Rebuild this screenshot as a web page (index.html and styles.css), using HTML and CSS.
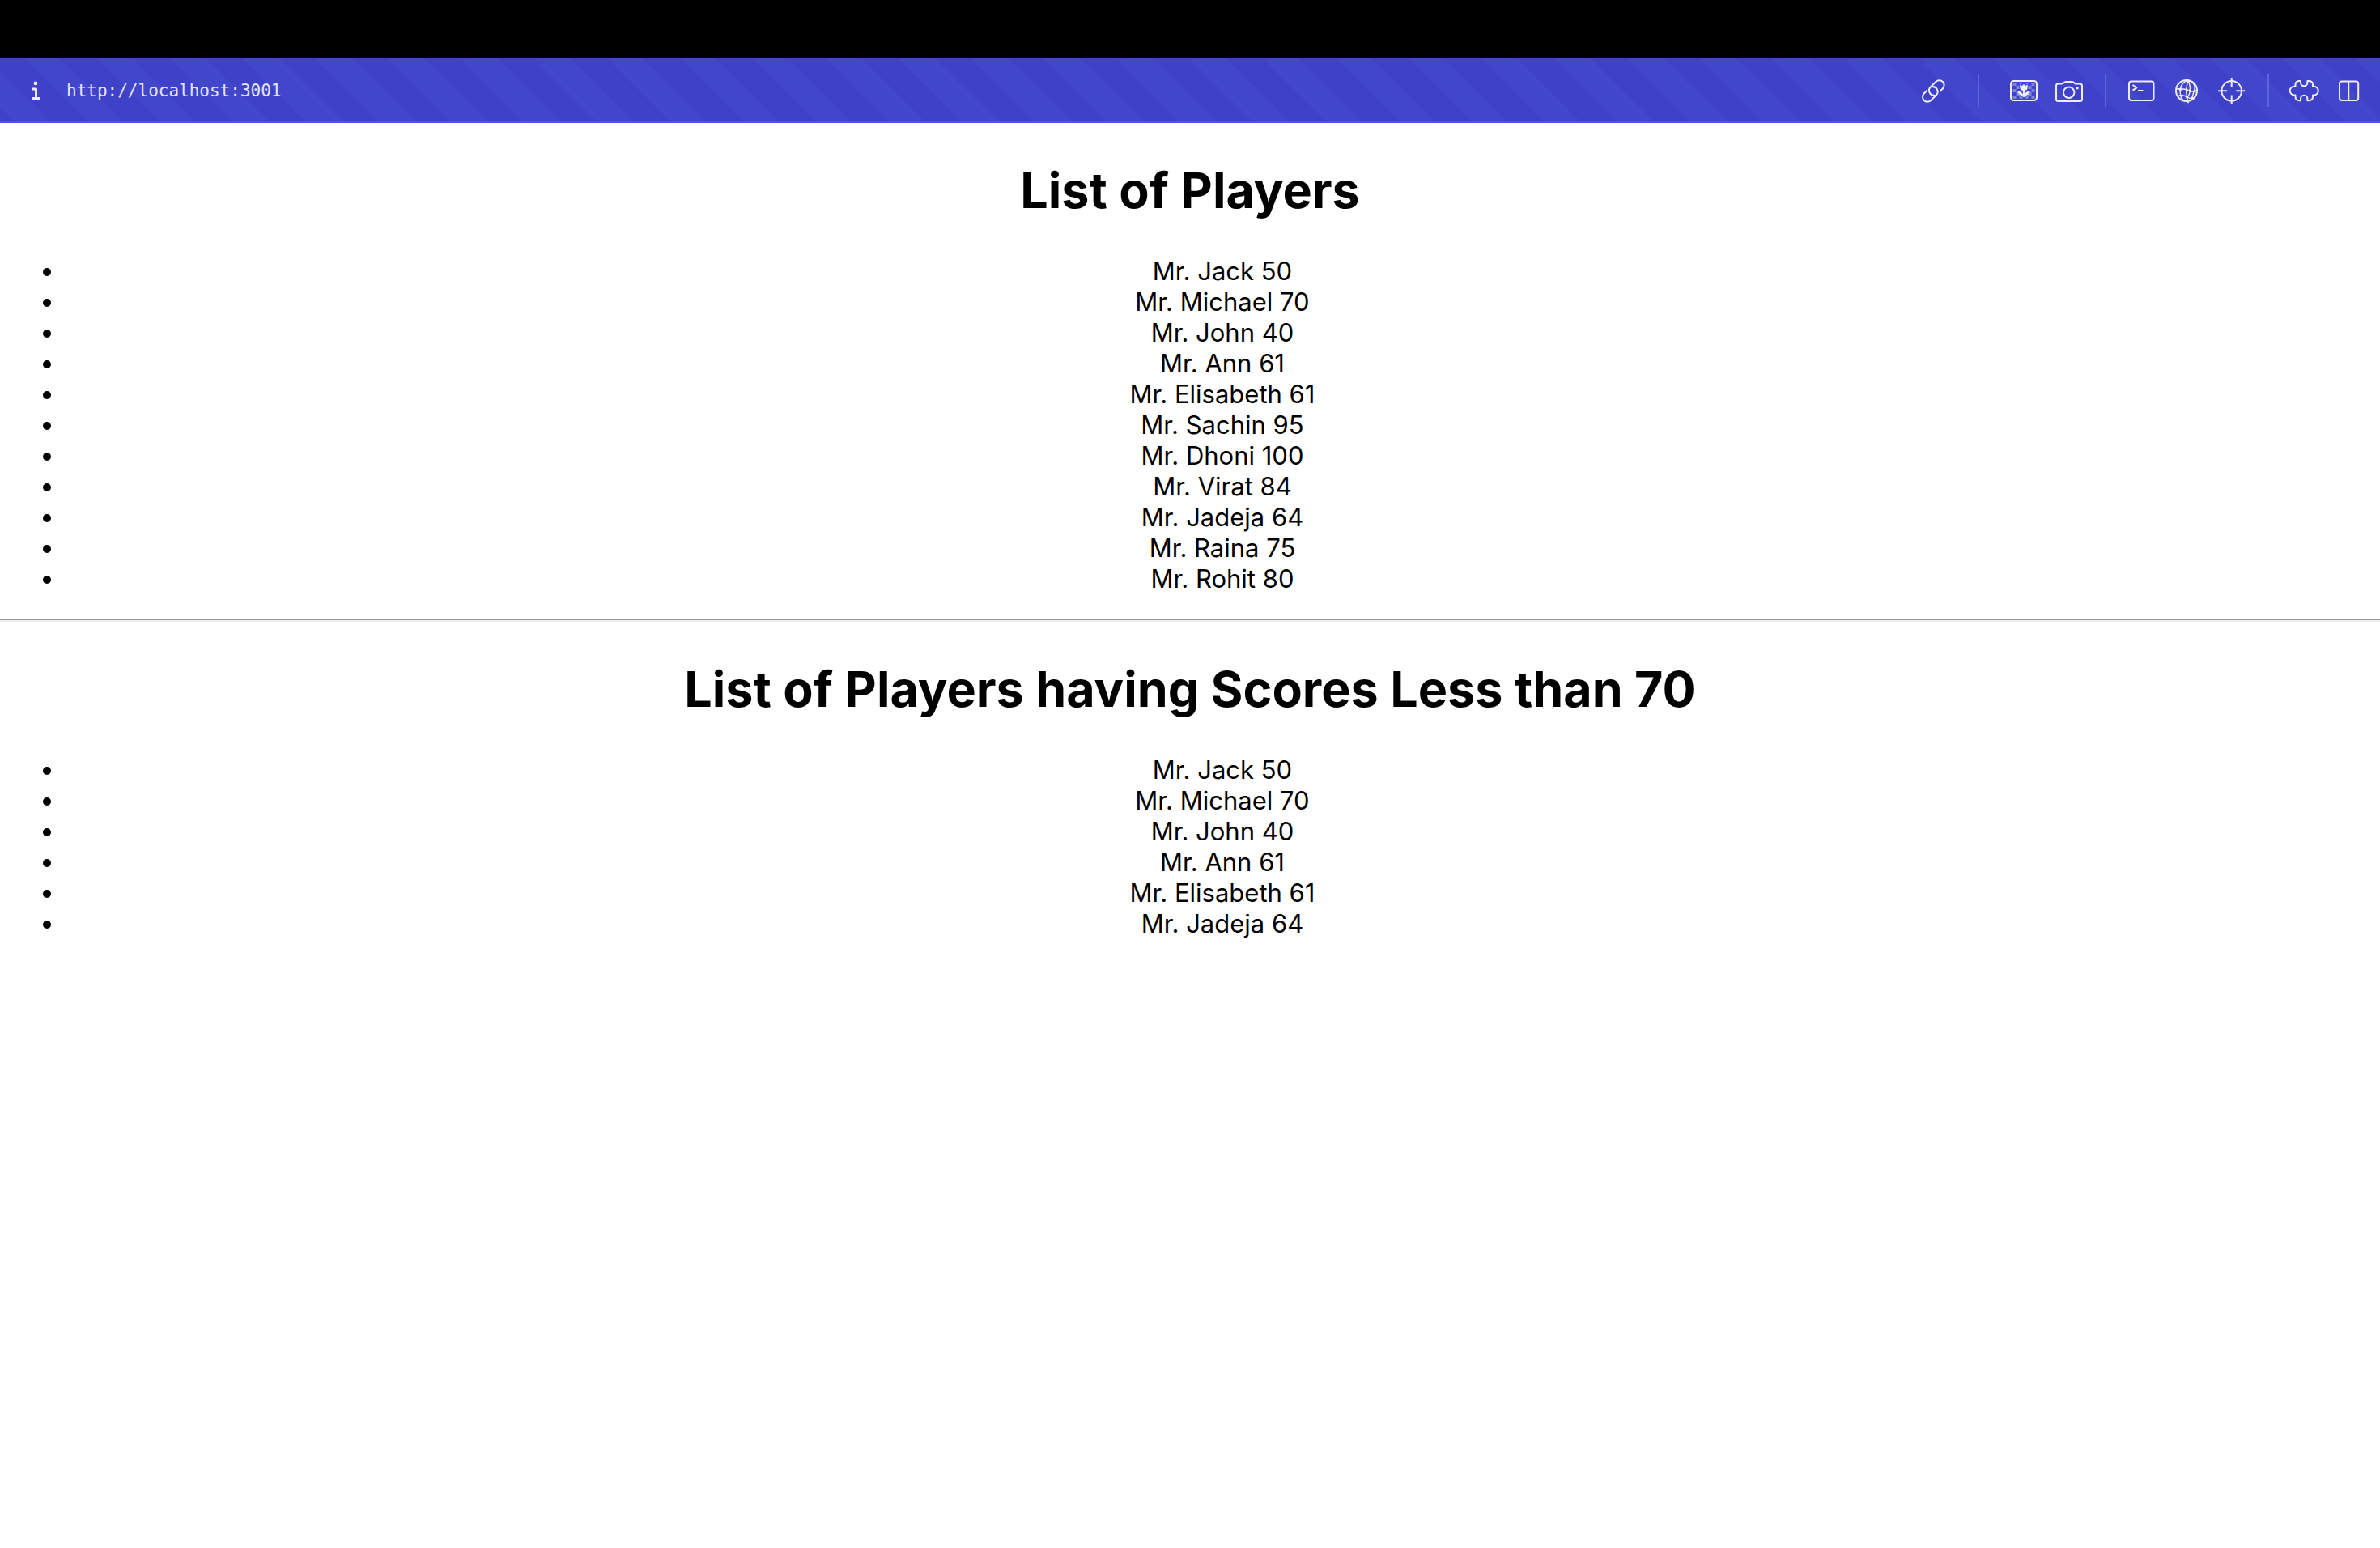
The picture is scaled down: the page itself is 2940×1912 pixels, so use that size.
FILE: index.html
```html
<!DOCTYPE html>
<html lang="en">
<head>
<meta charset="utf-8">
<meta name="viewport" content="width=device-width, initial-scale=1">
<title>List of Players</title>
<link rel="stylesheet" href="styles.css">
</head>
<body>
<header class="chrome">
  <div class="titlebar"></div>
  <div class="toolbar">
    <button class="info" type="button" aria-label="Site information">
      <svg class="icon" viewBox="0 0 40 40"><circle class="solid" cx="20" cy="11" r="2.400"/><path class="thick" d="M16 18H20.500V29M15.500 29.500H25.500"/></svg>
    </button>
    <input class="address" type="text" aria-label="Address" value="http://localhost:3001" spellcheck="false">
    <nav class="tools" aria-label="Page tools">
      <button class="tool" type="button" aria-label="Copy link">
        <svg class="icon" viewBox="0 0 40 40"><g transform="translate(20.300 20.500) rotate(-45)"><path d="M5 6H10.300A6 6 0 0 0 10.300-6H1A6 6 0 0 0-2 5.200"/><path d="M-5-6H-10.300A6 6 0 0 0-10.300 6H-1A6 6 0 0 0 2-5.200"/></g></svg>
      </button>
      <span class="divider divider-wide"></span>
      <button class="tool" type="button" aria-label="Capture element">
        <svg class="icon" viewBox="0 0 40 40"><path class="faint" d="M6.500 10h4v4h-4zM14.500 10h3v2h-3zM22.500 10h3v2h-3zM29.500 10h4v4h-4zM10.500 14h4v4h-4zM25.500 14h4v4h-4zM6.500 18h4v4h-4zM29.500 18h4v4h-4zM10.500 22h2l3 4h-5zM29.500 22h-2l-3 4h5zM6.500 26h4v4h-4zM14.500 27h4v3h-4zM22.500 27h3v3h-3zM29.500 26h4v4h-4z"/><rect x="4" y="8" width="32" height="24" rx="3.500"/><path class="solid" d="M15.300 12.500l2.500 1.500L20 12l2.200 2 2.500-1.500V16q0 3.500-3.700 4v4.500q2-4 7-4.500-1 6-7 6.300V28h-2v-1.700Q13 26 12 20q5 .5 7 4.500V20q-3.700-.5-3.700-4z"/></svg>
      </button>
      <button class="tool" type="button" aria-label="Take screenshot">
        <svg class="icon" viewBox="0 0 40 40"><path d="M6.500 11.500H11Q12.500 11.500 13.200 10.500T16 9H23.500Q25.500 9 26.500 10.500T29 11.500H33.500Q36 11.500 36 14V30.500Q36 33 33.500 33H6.500Q4 33 4 30.500V14Q4 11.500 6.500 11.500Z"/><circle cx="19.700" cy="22.300" r="6.700"/><circle class="solid" cx="30" cy="16.700" r="1.800"/></svg>
      </button>
      <span class="divider"></span>
      <button class="tool" type="button" aria-label="Console">
        <svg class="icon" viewBox="0 0 40 40"><rect x="5" y="8.500" width="30.500" height="23.500" rx="3"/><path d="M9.500 13L14.500 16.300 9.500 19.700M16 20H22.500"/></svg>
      </button>
      <button class="tool" type="button" aria-label="Network">
        <svg class="icon" viewBox="0 0 40 40"><circle cx="20" cy="20" r="13"/><path class="thin" d="M22 7Q13 10 12.300 19T16 32M22 7Q18.500 18 20.500 28T22 33M22 7Q25 14 24.300 20T20.500 28M22 7Q32 11 30 18T26 31M7 18Q16 17 24 20T33 18M9 27Q15 24 21 28T31.500 26"/><circle class="solid" cx="12.300" cy="18.500" r="1.700"/><circle class="solid" cx="24.300" cy="20" r="1.700"/><circle class="solid" cx="20.700" cy="28" r="1.700"/></svg>
      </button>
      <button class="tool" type="button" aria-label="Inspect element">
        <svg class="icon" viewBox="0 0 40 40"><circle cx="19.700" cy="20.300" r="12.300"/><path d="M19.700 4V15M19.700 25.500V36.500M3.200 20.300H14.200M25.200 20.300H36.200"/></svg>
      </button>
      <span class="divider"></span>
      <button class="tool" type="button" aria-label="Extensions">
        <svg class="icon" viewBox="0 0 40 40"><path d="M9.500 14.800V12.500Q9.500 8 14.500 8H16V10A4.200 4.200 0 0 0 24.400 10V8H26Q31 8 31 12.500V14.800H32.500A5.300 5.300 0 0 1 32.500 25.400H31V27.500Q31 32.200 26 32.200H24.400V30A4.200 4.200 0 0 0 16 30V32.200H14.500Q9.500 32.200 9.500 27.500V25.400H8A5.300 5.300 0 0 1 8 14.800Z"/></svg>
      </button>
      <button class="tool" type="button" aria-label="Split view">
        <svg class="icon" viewBox="0 0 40 40"><rect x="8" y="8.500" width="23.200" height="23.500" rx="3"/><path class="thin" d="M19.500 8.500V32"/></svg>
      </button>
    </nav>
  </div>
</header>
<main class="app">
  <h1>List of Players</h1>
  <ul>
    <li>Mr. Jack 50</li>
    <li>Mr. Michael 70</li>
    <li>Mr. John 40</li>
    <li>Mr. Ann 61</li>
    <li>Mr. Elisabeth 61</li>
    <li>Mr. Sachin 95</li>
    <li>Mr. Dhoni 100</li>
    <li>Mr. Virat 84</li>
    <li>Mr. Jadeja 64</li>
    <li>Mr. Raina 75</li>
    <li>Mr. Rohit 80</li>
  </ul>
  <hr>
  <h1>List of Players having Scores Less than 70</h1>
  <ul>
    <li>Mr. Jack 50</li>
    <li>Mr. Michael 70</li>
    <li>Mr. John 40</li>
    <li>Mr. Ann 61</li>
    <li>Mr. Elisabeth 61</li>
    <li>Mr. Jadeja 64</li>
  </ul>
</main>
</body>
</html>
```
FILE: styles.css
```css
* {
  box-sizing: border-box;
}

body {
  margin: 0;
  background: #fff;
  color: #000;
  font-family: Inter, "Liberation Sans", sans-serif;
  font-size: 31px;
  line-height: 38px;
}

.titlebar {
  height: 72px;
  background: #000;
}

.toolbar {
  display: flex;
  align-items: center;
  height: 80px;
  padding: 0 10px 0 16px;
  background-color: #3f42c9;
  background-image: linear-gradient(45deg, #4246cb 25%, #3f42c9 25% 50%, #4246cb 50% 75%, #3f42c9 75%);
  background-size: 90px 90px;
  background-position: 30px 0;
  box-shadow: inset 0 -2px #5255d0;
}

.info,
.tool {
  display: flex;
  align-items: center;
  justify-content: center;
  width: 56px;
  height: 56px;
  padding: 0;
  border: 0;
  background: none;
}

.address {
  flex: 1;
  min-width: 0;
  height: 40px;
  padding: 0 10px;
  border: 0;
  background: none;
  color: #e4e4fa;
  font-family: "DejaVu Sans Mono", monospace;
  font-size: 21px;
}

.tools {
  display: flex;
  align-items: center;
}

.divider {
  width: 2px;
  height: 40px;
  margin: 0 15px 0 16px;
  background: #5f63e2;
}

.divider-wide {
  margin: 0 27px;
}

.icon {
  width: 40px;
  height: 40px;
  fill: none;
  stroke: #ececfb;
  stroke-width: 2;
  stroke-linejoin: round;
}

.icon .thin {
  stroke-width: 1.5;
}

.icon .thick {
  stroke-width: 3;
}

.icon .solid {
  fill: #ececfb;
  stroke: none;
}

.icon .faint {
  fill: #8183de;
  stroke: none;
}

.app {
  text-align: center;
}

h1 {
  margin: 45px 0 43px;
  font-size: 61px;
  font-weight: 700;
  line-height: 76px;
}

ul {
  margin: 0 0 30px;
  padding: 0 0 0 80px;
}

hr {
  height: 4px;
  margin: 0;
  border: 0;
  border-top: 2px solid #9a9a9a;
  background: #eee;
}
```
